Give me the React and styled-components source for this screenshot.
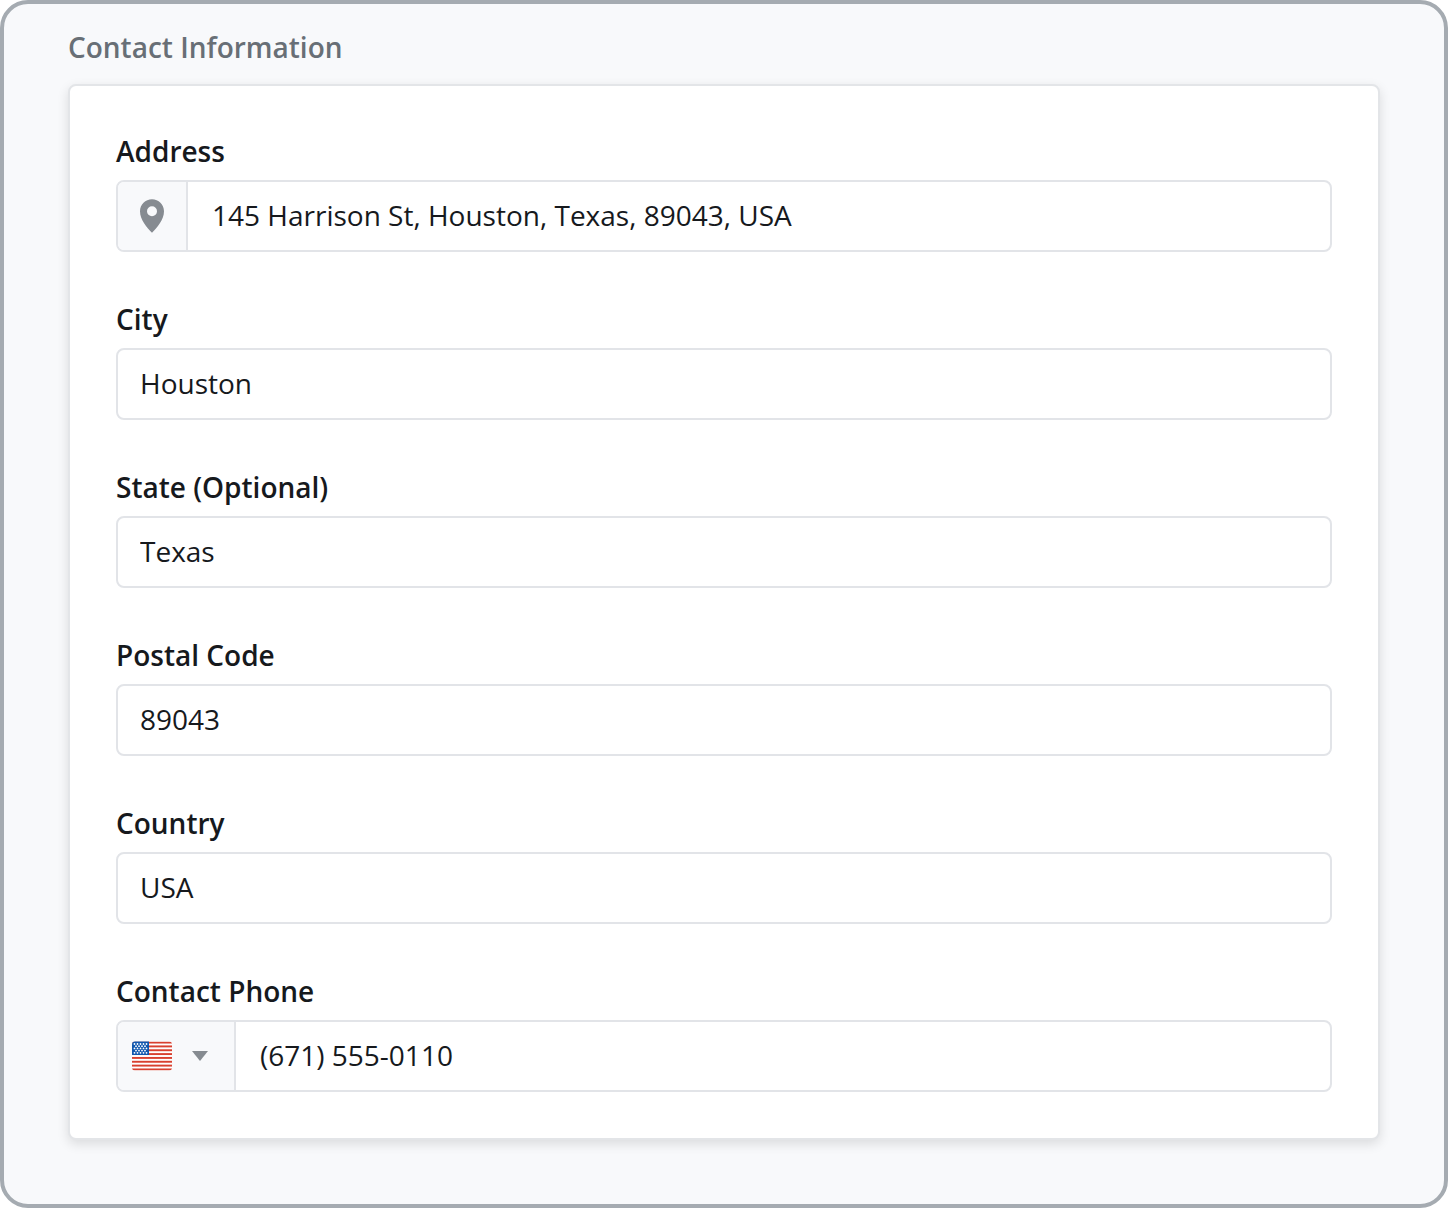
import React, { useState } from "react";
import styled, { createGlobalStyle } from "styled-components";

const GlobalStyle = createGlobalStyle`
  *, *::before, *::after { box-sizing: border-box; }
  body {
    margin: 0;
    background: #ffffff;
    color: #16191d;
    font-family: "Open Sans", "Noto Sans", sans-serif;
    font-size: 28px;
    line-height: 38px;
  }
`;

const Panel = styled.main`
  min-height: 100vh;
  padding: 24px 64px 64px;
  background: #f8f9fb;
  border: 4px solid #a5abb1;
  border-radius: 28px;
`;

const Title = styled.h1`
  margin: 0 0 18px;
  color: #686f76;
  font-size: 28px;
  font-weight: 600;
  line-height: 38px;
`;

const Card = styled.form`
  display: flex;
  flex-direction: column;
  gap: 48px;
  padding: 46px;
  background: #ffffff;
  border: 2px solid #e3e5e8;
  border-radius: 8px;
  box-shadow: 0 4px 12px rgba(0, 0, 0, 0.12);
`;

const Field = styled.div`
  display: flex;
  flex-direction: column;
  gap: 10px;
`;

const Label = styled.label`
  font-weight: 600;
`;

const Control = styled.div`
  display: flex;
  height: 72px;
  overflow: hidden;
  background: #ffffff;
  border: 2px solid #e2e4e8;
  border-radius: 8px;

  &:focus-within { border-color: #8a9097; }
`;

const Input = styled.input`
  flex: 1;
  min-width: 0;
  padding: 0 ${(p) => (p.$wide ? 24 : 22)}px 2px;
  border: 0;
  outline: 0;
  background: transparent;
  color: inherit;
  font: inherit;
`;

const Addon = styled.span`
  display: flex;
  align-items: center;
  justify-content: center;
  width: 70px;
  background: #f8f9fb;
  border-right: 2px solid #e2e4e8;
`;

const CountryButton = styled.button`
  display: flex;
  align-items: center;
  gap: 20px;
  padding: 0 26px 0 14px;
  border: 0;
  border-right: 2px solid #e2e4e8;
  background: #f8f9fb;
  cursor: pointer;
`;

const PinIcon = () => (
  <svg width="24" height="34" viewBox="0 0 24 34" aria-hidden="true">
    <path
      fill="#868b91"
      fillRule="evenodd"
      d="M12 .3C5.400 .3 0 5.500 0 12.200c0 8.500 7 16.500 12 21.500 5-5 12-13 12-21.500C24 5.500 18.600 .3 12 .3Zm0 6.900a5 5 0 1 1 0 10 5 5 0 0 1 0-10Z"
    />
  </svg>
);

const CaretIcon = () => (
  <svg width="16" height="10" viewBox="0 0 16 10" aria-hidden="true">
    <path fill="#868b91" d="M0 0h16L8 10Z" />
  </svg>
);

const STRIPES = [0, 1, 2, 3, 4, 5, 6, 7];
const STAR_ROWS = [0, 1, 2, 3, 4];

const FlagIcon = () => (
  <svg width="40" height="30" viewBox="0 0 40 30" aria-hidden="true">
    <defs>
      <clipPath id="flag-shape">
        <rect y="0.600" width="40" height="28.800" rx="3" />
      </clipPath>
    </defs>
    <g clipPath="url(#flag-shape)">
      <rect width="40" height="30" fill="#ffffff" />
      {STRIPES.map((i) => (
        <rect key={i} y={0.6 + i * 3.84} width="40" height="1.920" fill="#d8402f" />
      ))}
      <rect width="17" height="14" fill="#1057ae" />
      {STAR_ROWS.map((row) =>
        (row % 2 ? [4, 7, 10, 13] : [2.5, 5.5, 8.5, 11.5, 14.5]).map((x) => (
          <circle key={`${row}-${x}`} cx={x} cy={3 + row * 2.2} r="0.900" fill="#ffffff" />
        ))
      )}
    </g>
  </svg>
);

const FIELDS = [
  { id: "address", label: "Address", value: "145 Harrison St, Houston, Texas, 89043, USA" },
  { id: "city", label: "City", value: "Houston" },
  { id: "state", label: "State (Optional)", value: "Texas" },
  { id: "postal", label: "Postal Code", value: "89043" },
  { id: "country", label: "Country", value: "USA" },
  { id: "phone", label: "Contact Phone", value: "(671) 555-0110", type: "tel" },
];

const ADDONS = {
  address: <Addon><PinIcon /></Addon>,
  phone: (
    <CountryButton type="button" aria-label="Country code">
      <FlagIcon />
      <CaretIcon />
    </CountryButton>
  ),
};

export default function App() {
  const [values, setValues] = useState(() =>
    Object.fromEntries(FIELDS.map((f) => [f.id, f.value]))
  );

  return (
    <>
      <GlobalStyle />
      <Panel>
        <Title>Contact Information</Title>
        <Card>
          {FIELDS.map(({ id, label, type = "text" }) => (
            <Field key={id}>
              <Label htmlFor={id}>{label}</Label>
              <Control>
                {ADDONS[id]}
                <Input
                  id={id}
                  type={type}
                  $wide={Boolean(ADDONS[id])}
                  value={values[id]}
                  onChange={(e) => setValues({ ...values, [id]: e.target.value })}
                />
              </Control>
            </Field>
          ))}
        </Card>
      </Panel>
    </>
  );
}
